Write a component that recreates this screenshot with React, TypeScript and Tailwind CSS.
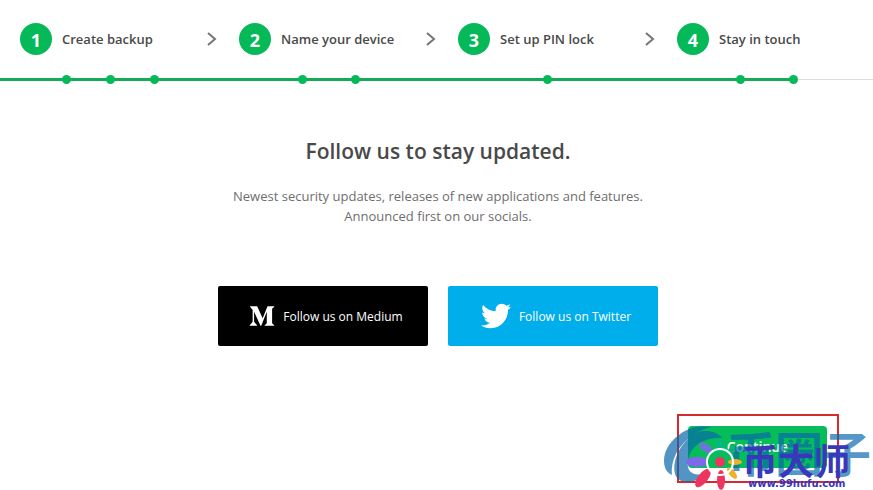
import { FaMediumM, FaTwitter } from "react-icons/fa";

const steps = ["Create backup", "Name your device", "Set up PIN lock", "Stay in touch"];

function Dots({ count, wide = false }: { count: number; wide?: boolean }) {
  return (
    <div className={`flex items-center justify-center ${wide ? "gap-11" : "gap-[35px]"}`}>
      {Array.from({ length: count }, (_, i) => (
        <span key={i} className="h-[9px] w-[9px] rounded-full bg-[#05b959]" />
      ))}
    </div>
  );
}

function Stepper() {
  return (
    <header>
      <ol className="grid h-[75px] grid-cols-4 items-center pt-[3px]">
        {steps.map((label, i) => (
          <li key={label} className="flex items-center pl-5">
            <span className="flex h-8 w-8 shrink-0 items-center justify-center rounded-full bg-[#05b959] pt-px text-lg font-bold text-white">
              {i + 1}
            </span>
            <span className="ml-[10px] pt-0.5 text-[13px] font-semibold whitespace-nowrap text-[#494949]">
              {label}
            </span>
            {i < steps.length - 1 && (
              <svg className="mr-[2px] ml-auto h-4 w-[10px] shrink-0" viewBox="0 0 10 16" fill="none" stroke="#757575" strokeWidth={2}>
                <path d="M1 2l7 6-7 6" />
              </svg>
            )}
          </li>
        ))}
      </ol>

      <div className="relative h-[9px]">
        <div className="absolute inset-x-0 top-1 h-px bg-[#dcdcdc]" />
        <div className="absolute top-[3px] left-0 h-[3px] w-[91%] bg-[#16ab58]" />
        <div className="relative grid grid-cols-4 pl-px">
          <Dots count={3} />
          <Dots count={2} wide />
          <Dots count={1} />
          <Dots count={2} wide />
        </div>
      </div>
    </header>
  );
}

function Watermark() {
  return (
    <div className="pointer-events-none absolute -top-[13px] -left-[26px] h-[77px] w-[212px]" aria-hidden="true">
      <svg className="h-full w-full" viewBox="662 413 212 77">
        <rect x="678" y="415" width="160" height="67" fill="none" stroke="#d62a2e" strokeWidth="2" />
        <g fill="#0868ad" fillOpacity=".7">
          <path d="M711 427C690 422 664 440 664 461c0 7 3 12 8 14C670 455 685 434 711 427z" />
          <path d="M722 438C716 430 700 428 690 437C678 447 672 463 675 474C679 487 700 482 707 473C695 477 686 473 688 461C690 447 702 437 722 438z" />
        </g>
        <text x="727" y="472" fill="#0868ad" fillOpacity=".7" fontSize="48" fontWeight="700" fontFamily="Noto Sans CJK SC, sans-serif">
          币圈子
        </text>
        <g fill="#8068ed">
          <ellipse cx="697" cy="462" rx="11" ry="5" />
          <ellipse cx="706" cy="448" rx="8" ry="4" transform="rotate(35 706 448)" fillOpacity=".85" />
        </g>
        <ellipse cx="720" cy="446" rx="3" ry="7" fill="#00b88b" />
        <ellipse cx="731" cy="451" rx="3" ry="6" transform="rotate(35 731 451)" fill="#12b078" />
        <ellipse cx="735" cy="462" rx="7" ry="3" fill="#efb02c" />
        <ellipse cx="732" cy="473" rx="7" ry="3" transform="rotate(50 732 473)" fill="#efb02c" />
        <ellipse cx="721" cy="480" rx="4" ry="10" fill="#ee355f" />
        <ellipse cx="703" cy="478" rx="5" ry="11" transform="rotate(38 703 478)" fill="#ee355f" />
        <circle cx="720" cy="462" r="13" fill="none" stroke="#fff" strokeWidth="2" />
        <circle cx="720" cy="462" r="5" fill="#ee355f" />
        <text x="742" y="475" fill="#3938bb" fontSize="36" fontWeight="700" fontFamily="Noto Sans CJK SC, sans-serif">
          币大师
        </text>
        <text x="748" y="487" fill="#3938bb" fontSize="10" fontWeight="700" fontFamily="DejaVu Sans, sans-serif">
          www.99hufu.com
        </text>
      </svg>
    </div>
  );
}

export default function App() {
  return (
    <div className="overflow-hidden bg-white font-['Open_Sans',sans-serif]">
      <div className="-mr-[3px]">
        <Stepper />

        <main className="flex flex-col items-center pt-[50px] text-center">
          <h1 className="text-[21px] leading-[34px] font-semibold text-[#494949]">
            Follow us to stay updated.
          </h1>
          <p className="mt-[18px] text-[13px] leading-5 text-[#6e6e6e]">
            Newest security updates, releases of new applications and features.
            <br />
            Announced first on our socials.
          </p>

          <div className="mt-[60px] flex gap-5">
            <a href="#medium" className="flex h-[60px] w-[210px] items-center justify-center gap-2 rounded-xs bg-black pl-1.5 text-xs text-white">
              <FaMediumM className="h-[26px] w-[26px]" />
              <span className="pt-0.5">Follow us on Medium</span>
            </a>
            <a href="#twitter" className="flex h-[60px] w-[210px] items-center justify-center gap-2 rounded-xs bg-[#00aeec] pl-1.5 text-xs text-white">
              <FaTwitter className="h-[30px] w-[30px]" />
              <span className="pt-0.5">Follow us on Twitter</span>
            </a>
          </div>
        </main>

        <footer className="flex justify-end pt-20 pr-[49px] pb-[22px]">
          <div className="relative">
            <button type="button" className="h-[42px] w-[139px] rounded-sm bg-[#05be59] text-sm font-semibold text-white">
              Continue
            </button>
            <Watermark />
          </div>
        </footer>
      </div>
    </div>
  );
}
